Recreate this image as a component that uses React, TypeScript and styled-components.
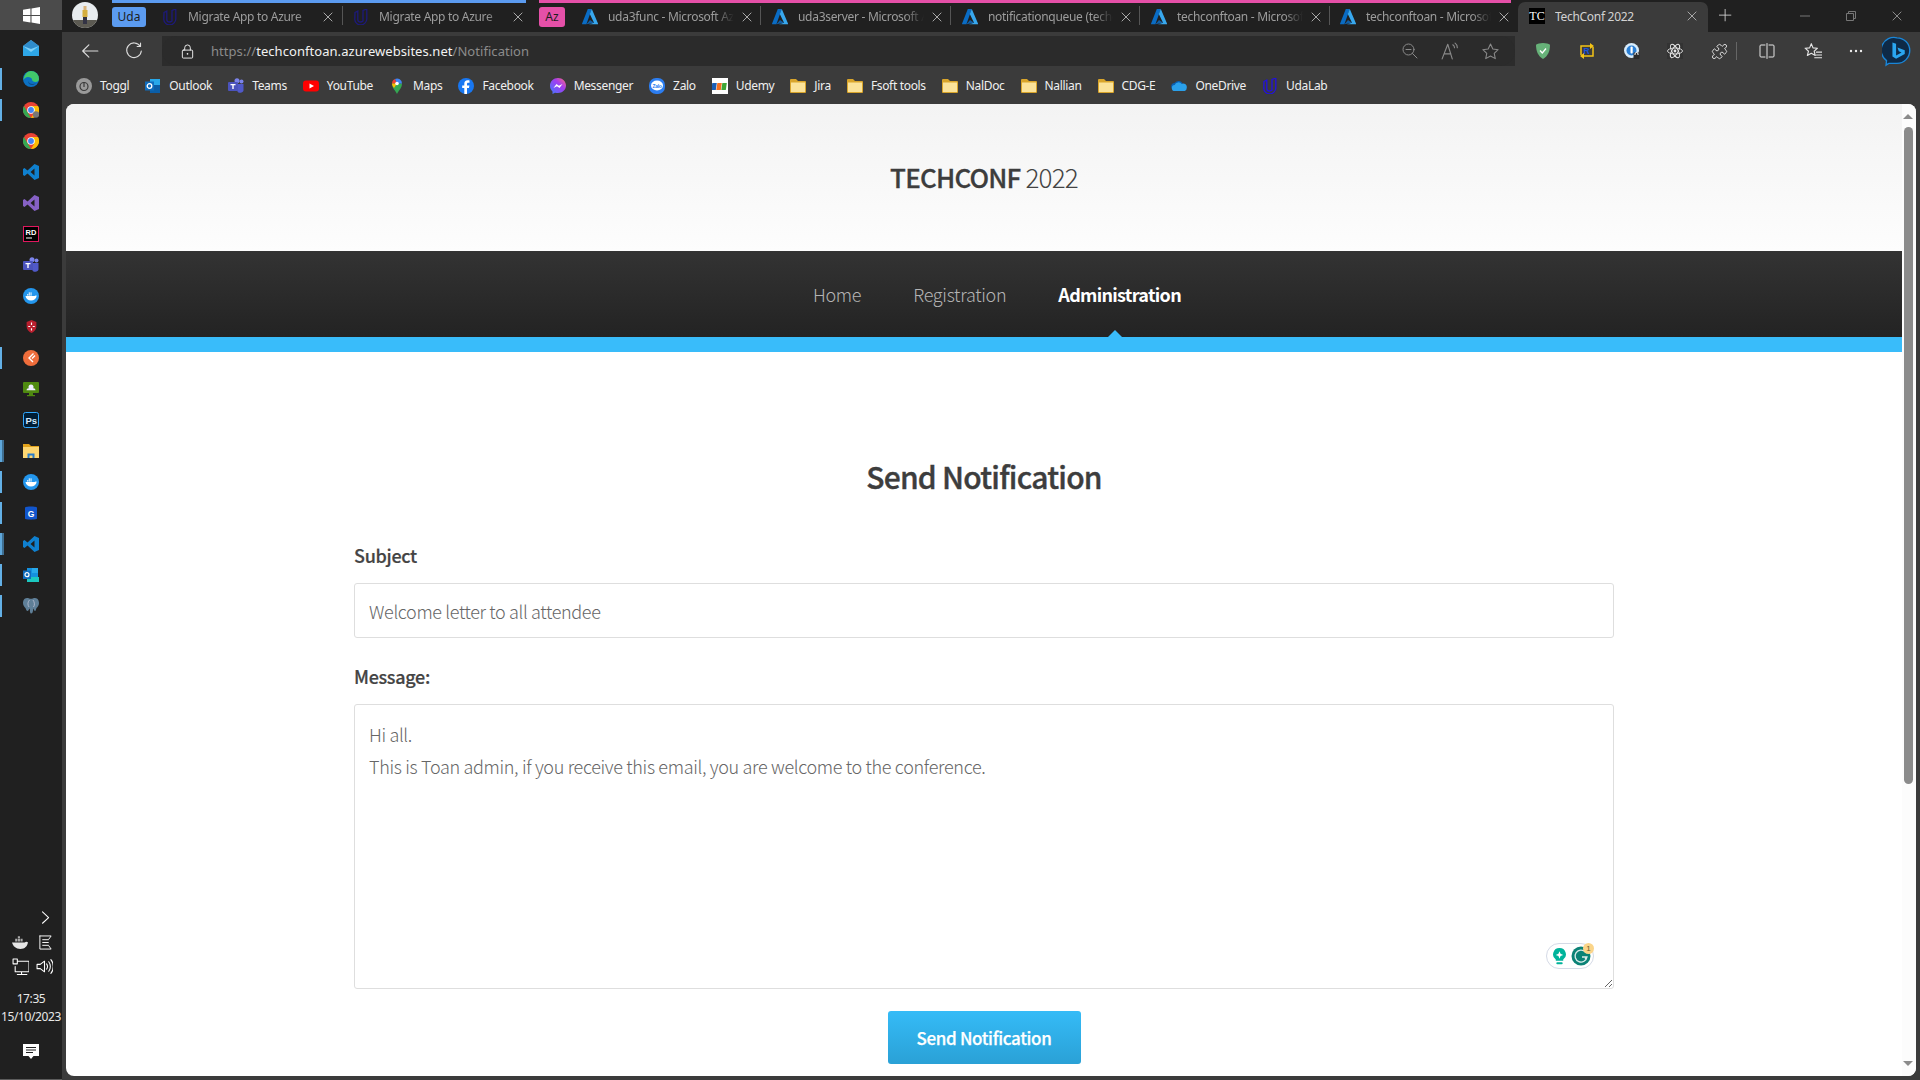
import React from "react";
import styled, { createGlobalStyle } from "styled-components";
import { Puzzle } from "lucide-react";

const GlobalStyle = createGlobalStyle`
  html, body { margin: 0; padding: 0; width: 1920px; height: 1080px; overflow: hidden; background: #202020; }
  * { box-sizing: border-box; }
`;

const CHROME_FONT = `"Noto Sans", "Open Sans", sans-serif`;
const PAGE_FONT = `"Noto Sans CJK SC", "Noto Sans", sans-serif`;

const Shell = styled.div`
  display: grid;
  grid-template-columns: 62px 1fr;
  width: 1920px;
  height: 1080px;
  overflow: hidden;
  font-family: ${CHROME_FONT};
`;

/* ---------- Windows taskbar on the left ---------- */
const Taskbar = styled.aside`
  display: flex;
  flex-direction: column;
  height: 1080px;
  background: #202020;
  border-bottom: 1px solid #5c5c5c;
`;
const StartButton = styled.div`
  height: 30px;
  background: #4b4b4b;
  display: flex;
  align-items: center;
  justify-content: center;
  flex: none;
`;
const AppList = styled.div`
  display: flex;
  flex-direction: column;
  padding-top: 2px;
`;
const AppSlot = styled.div<{ $run?: number }>`
  position: relative;
  height: 31px;
  display: flex;
  align-items: center;
  justify-content: center;
  &::before {
    content: "";
    display: ${(p) => (p.$run ? "block" : "none")};
    position: absolute;
    left: 0;
    top: 5px;
    height: 22px;
    width: ${(p) => (p.$run === 2 ? 4 : 2)}px;
    background: ${(p) => (p.$run === 2 ? "linear-gradient(90deg,#5fa8dc 50%,#3f6f92 50%)" : "#63b0e6")};
  }
`;
const Tray = styled.div`
  margin-top: auto;
  display: flex;
  flex-direction: column;
  align-items: center;
  color: #fff;
`;
const TrayRow = styled.div<{ $end?: boolean }>`
  width: 62px;
  height: 24px;
  display: flex;
  align-items: center;
  justify-content: ${(p) => (p.$end ? "flex-end" : "space-between")};
  padding: ${(p) => (p.$end ? "0 9px 0 0" : "0 9px 0 12px")};
`;
const Clock = styled.div`
  margin-top: 12px;
  font: 12px/18px ${CHROME_FONT};
  letter-spacing: -0.4px;
  text-align: center;
  color: #e8e8e8;
`;
const ActionCenter = styled.div`
  margin: 18px 0 19px;
  height: 16px;
  display: flex;
`;

/* ---------- Browser chrome ---------- */
const Browser = styled.div`
  display: flex;
  flex-direction: column;
  background: #3b3b3b;
  height: 1080px;
  min-width: 0;
`;
const TabStrip = styled.div`
  height: 32px;
  background: #202020;
  display: flex;
  align-items: stretch;
  flex: none;
  position: relative;
`;
const Avatar = styled.div`
  width: 50px;
  display: flex;
  align-items: center;
  justify-content: center;
  padding-right: 4px;
  padding-bottom: 2px;
`;
const Group = styled.div<{ $color: string; $trim?: number }>`
  display: flex;
  align-items: stretch;
  position: relative;
  margin-right: 7px;
  padding-top: 3px;
  &::before {
    content: "";
    position: absolute;
    left: 0;
    top: 0;
    right: ${(p) => p.$trim || 0}px;
    height: 3px;
    background: ${(p) => p.$color};
  }
`;
const Chip = styled.div<{ $color: string; $w: number }>`
  width: ${(p) => p.$w}px;
  height: 20px;
  margin-top: 4px;
  border-radius: 3px;
  background: ${(p) => p.$color};
  color: #1e1e1e;
  font-size: 12px;
  line-height: 20px;
  text-align: center;
`;
const Tab = styled.div<{ $w: number; $sep?: boolean; $pl?: number; $pr?: number }>`
  width: ${(p) => p.$w}px;
  display: flex;
  align-items: center;
  padding: 0 ${(p) => p.$pr ?? 9}px 2px ${(p) => p.$pl ?? 11}px;
  position: relative;
  color: #9c9c9c;
  font-size: 12px;
  letter-spacing: -0.3px;
  &::after {
    content: "";
    display: ${(p) => (p.$sep ? "block" : "none")};
    position: absolute;
    right: 0;
    top: 3px;
    height: 19px;
    width: 1px;
    background: #555;
  }
`;
const ActiveTab = styled(Tab)`
  background: #3b3b3b;
  color: #d2d2d2;
  border-radius: 7px 7px 0 0;
  height: 30px;
  margin-top: 2px;
`;
const TabTitle = styled.span`
  flex: 1;
  min-width: 0;
  margin-left: 10px;
  white-space: nowrap;
  overflow: hidden;
  -webkit-mask-image: linear-gradient(90deg, #000 85%, transparent);
  mask-image: linear-gradient(90deg, #000 85%, transparent);
`;
const PlainTitle = styled(TabTitle)`
  -webkit-mask-image: none;
  mask-image: none;
`;
const TabClose = styled.span`
  margin-left: 8px;
  display: flex;
  flex: none;
`;
const NewTab = styled.div`
  width: 36px;
  display: flex;
  align-items: center;
  justify-content: center;
`;
const WindowButtons = styled.div`
  margin-left: auto;
  display: flex;
  align-items: center;
`;
const WindowButton = styled.div`
  width: 46px;
  height: 32px;
  display: flex;
  align-items: center;
  justify-content: center;
`;
const TcFavicon = styled.div`
  width: 16px;
  height: 16px;
  background: #000;
  color: #fff;
  font: 12px/16px "Liberation Serif", serif;
  letter-spacing: 0;
  text-align: center;
  flex: none;
`;

const ToolbarBand = styled.div`
  height: 34px;
  padding-top: 4px;
  background: linear-gradient(#3b3b3b 4px, #2c2c2c 4px);
  display: flex;
  flex: none;
`;
const NavButtons = styled.div`
  width: 100px;
  display: flex;
  align-items: center;
  padding-left: 19px;
  gap: 26px;
  background: #3b3b3b;
`;
const AddressBar = styled.div`
  width: 1353px;
  height: 30px;
  background: #2b2b2b;
  border-radius: 15px;
  display: flex;
  align-items: center;
  padding: 0 16px 0 18px;
  font-size: 13px;
  letter-spacing: 0.05px;
  color: #8c8c8c;
`;
const UrlText = styled.div`
  margin-left: 16px;
  white-space: nowrap;
  b { font-weight: 400; color: #f2f2f2; }
`;
const AddressIcons = styled.div`
  margin-left: auto;
  display: flex;
  align-items: center;
  gap: 23px;
`;
const ToolActions = styled.div`
  flex: 1;
  display: flex;
  align-items: center;
  background: #3b3b3b;
  padding-left: 20px;
`;
const ToolSlot = styled.div<{ $w: number }>`
  width: ${(p) => p.$w}px;
  display: flex;
  justify-content: flex-start;
  align-items: center;
`;

const BookmarkBar = styled.div`
  height: 38px;
  flex: none;
  display: flex;
  align-items: center;
  gap: 16px;
  padding: 1px 0 0 14px;
  color: #f0f0f0;
  font-size: 12px;
`;
const Bookmark = styled.div`
  display: flex;
  align-items: center;
  gap: 8px;
  white-space: nowrap;
  letter-spacing: -0.33px;
`;

/* ---------- Page in the browser ---------- */
const Viewport = styled.div`
  margin: 0 4px 4px;
  height: 972px;
  background: #fff;
  border-radius: 8px;
  overflow: hidden;
  display: flex;
  font-family: ${PAGE_FONT};
`;
const Page = styled.div`
  flex: 1;
  min-width: 0;
  display: flex;
  flex-direction: column;
`;
const Masthead = styled.header`
  height: 147px;
  background: linear-gradient(#f3f3f3, #fdfdfd);
  display: flex;
  justify-content: center;
  padding-top: 53px;
`;
const Brand = styled.h1`
  margin: 0;
  font-size: 26px;
  line-height: 40px;
  font-weight: 300;
  color: #444;
  letter-spacing: -0.8px;
  b { font-weight: 500; color: #3d3d3d; -webkit-text-stroke: 0.3px currentColor; }
`;
const NavBar = styled.nav`
  height: 86px;
  background: linear-gradient(#333, #232323);
  display: flex;
  justify-content: center;
  gap: 52px;
  padding: 29px 0 0 26px;
`;
const NavLink = styled.a<{ $active?: boolean }>`
  position: relative;
  font-size: 18px;
  line-height: 28px;
  font-weight: ${(p) => (p.$active ? 700 : 300)};
  letter-spacing: ${(p) => (p.$active ? "-0.7px" : "-0.3px")};
  color: ${(p) => (p.$active ? "#fff" : "#b4b4b4")};
  height: 57px;
  &::after {
    content: "";
    display: ${(p) => (p.$active ? "block" : "none")};
    position: absolute;
    bottom: 0;
    left: 50%;
    margin-left: -12px;
    border: 7px solid transparent;
    border-top: 0;
    border-bottom-color: #39bcfa;
  }
`;
const AccentBar = styled.div`
  height: 15px;
  background: #39bcfa;
`;
const Content = styled.main`
  width: 1260px;
  margin: 0 auto;
  padding-top: 102px;
`;
const Heading = styled.h2`
  margin: 0 0 44px;
  font-size: 30px;
  line-height: 44px;
  font-weight: 500;
  text-align: center;
  color: #3d3d3d;
  letter-spacing: -0.76px;
  -webkit-text-stroke: 0.4px currentColor;
`;
const Label = styled.label`
  display: block;
  font-size: 18px;
  line-height: 26px;
  font-weight: 500;
  letter-spacing: -0.3px;
  color: #444;
  margin-bottom: 15px;
  -webkit-text-stroke: 0.2px currentColor;
`;
const TextInput = styled.input`
  display: block;
  width: 100%;
  height: 55px;
  border: 1px solid #dedede;
  border-radius: 3px;
  padding: 0 14px;
  margin-bottom: 25px;
  font: 300 18px ${PAGE_FONT};
  letter-spacing: -0.35px;
  color: #666;
  background: #fff;
  outline: none;
`;
const AreaWrap = styled.div`
  position: relative;
  height: 285px;
`;
const TextArea = styled.textarea`
  display: block;
  width: 100%;
  height: 285px;
  border: 1px solid #dedede;
  border-radius: 3px;
  padding: 13px 14px;
  font: 300 18px/32px ${PAGE_FONT};
  letter-spacing: -0.33px;
  color: #666;
  background: #fff;
  outline: none;
`;
const GrammarlyPill = styled.div`
  position: absolute;
  right: 20px;
  bottom: 20px;
  width: 48px;
  height: 26px;
  border: 1px solid #d5dae6;
  border-radius: 13px;
  background: #fff;
  display: flex;
  align-items: center;
  justify-content: space-between;
  padding: 0 2px 0 4px;
`;
const GrammarlyBadge = styled.span`
  position: absolute;
  top: -1px;
  right: -1px;
  width: 11px;
  height: 11px;
  border-radius: 50%;
  background: #fbd58a;
  color: #6b5a2a;
  font: 8px/11px "Liberation Sans", sans-serif;
  text-align: center;
`;
const ButtonRow = styled.div`
  display: flex;
  justify-content: center;
  padding-top: 22px;
`;
const SendButton = styled.button`
  width: 193px;
  height: 53px;
  border: 0;
  border-radius: 3px;
  background: linear-gradient(#35bbf7, #2aa1d6);
  color: #fff;
  font: 500 17px ${PAGE_FONT};
  letter-spacing: -0.35px;
  -webkit-text-stroke: 0.25px currentColor;
`;
const Scrollbar = styled.div`
  width: 14px;
  background: #fcfcfc;
  position: relative;
  flex: none;
`;
const ScrollThumb = styled.div`
  position: absolute;
  left: 2px;
  top: 23px;
  width: 9px;
  height: 657px;
  border-radius: 5px;
  background: #8b8b8b;
`;
const ScrollArrow = styled.div<{ $down?: boolean }>`
  position: absolute;
  left: 1px;
  ${(p) => (p.$down ? "bottom: 10px;" : "top: 10px;")}
  border-left: 5px solid transparent;
  border-right: 5px solid transparent;
  ${(p) => (p.$down ? "border-top: 5px solid #8b8b8b;" : "border-bottom: 5px solid #8b8b8b;")}
`;

/* ---------- Icon drawings ---------- */
type IconProps = { s?: number };
const Svg = ({ s = 16, children, vb = "0 0 16 16" }: { s?: number; children: React.ReactNode; vb?: string }) => (
  <svg width={s} height={s} viewBox={vb} style={{ display: "block", flex: "none" }}>{children}</svg>
);
const line = { fill: "none", stroke: "currentColor", strokeWidth: 1, strokeLinecap: "round", strokeLinejoin: "round" } as const;

const WinLogo = () => (
  <Svg s={17}><path fill="#fff" d="M0 2.5 7 1.5V7.5H0zM8 1.4 16 0V7.5H8zM0 8.5H7V14.5L0 13.5zM8 8.5H16V16L8 14.6z" /></Svg>
);
const MailIcon = () => (
  <Svg><path fill="#2ea7e8" d="M0 6h16v10H0z" /><path fill="#7fd0f7" d="M0 6 8 12l8-6L8 0z" /><path fill="#0d6fb8" d="M0 6 8 0l8 6-8 3z" opacity=".7" /></Svg>
);
const EdgeIcon = () => (
  <Svg>
    <circle cx="8" cy="8" r="8" fill="#0c71c3" />
    <path fill="#41c96a" d="M8 0a8 8 0 0 1 8 8c0 2-1.500 3-3.500 3S9 10 9 8.500 7 6 5 6 1 7.500.500 9C1 4 4 0 8 0z" />
    <path fill="#16365c" d="M5 10c1 3 5 4 8 2-2 3-8 3-8-2z" opacity=".6" />
  </Svg>
);
const ChromeIcon = ({ badge }: { badge?: boolean }) => (
  <svg width="16" height="16" viewBox="0 0 16 16" style={{ display: "block" }}>
    <circle cx="8" cy="8" r="8" fill="#e94235" />
    <path fill="#34a853" d="M8 16A8 8 0 0 1 1 4l4 7 3 5z" />
    <path fill="#fbbc04" d="M8 16a8 8 0 0 0 7-12H8l3 7z" />
    <circle cx="8" cy="8" r="3.800" fill="#fff" />
    <circle cx="8" cy="8" r="2.900" fill="#4285f4" />
    {badge && <circle cx="13" cy="12.500" r="3.200" fill="#777" />}
  </svg>
);
const VsCodeIcon = () => (
  <Svg><path fill="#0f80cf" d="M11.500 0 16 2v12l-4.500 2L4.500 9.500 1.500 12 0 11V5l1.500-1 3 2.500zM11.500 4.500 7.500 8l4 3.500z" /></Svg>
);
const VsIcon = () => (
  <Svg><path fill="#8661c5" d="M11.500 0 16 2v12l-4.500 2L4.500 9.500 1.500 12 0 11V5l1.500-1 3 2.500zM11.500 4.500 7.500 8l4 3.500z" /></Svg>
);
const RiderIcon = () => (
  <Svg>
    <rect x=".5" y=".5" width="15" height="15" fill="#000" stroke="#e0185e" />
    <text x="2.500" y="9" fontSize="7.500" fontWeight="700" fill="#fff" fontFamily="Liberation Sans">RD</text>
    <rect x="3" y="11.500" width="6" height="1" fill="#fff" />
  </Svg>
);
const TeamsIcon = ({ s = 16 }: IconProps) => (
  <Svg s={s}>
    <circle cx="13.500" cy="3.500" r="2" fill="#7b83eb" />
    <circle cx="9" cy="2.700" r="2.500" fill="#7b83eb" />
    <path fill="#5059c9" d="M9 6h6.500v5a3 3 0 0 1-6.500 1z" />
    <rect x="0" y="4" width="10" height="9" rx="1" fill="#4b53bc" />
    <path fill="#fff" d="M2.500 6h5v1.200H5.700V11H4.300V7.200H2.500z" />
  </Svg>
);
const DockerCircle = () => (
  <Svg>
    <circle cx="8" cy="8" r="8" fill="#2396ed" />
    <path fill="#fff" d="M2.500 8h9c.5-.7 1.500-.8 2.200-.3-.4 3-2.700 4.800-5.700 4.800-3 0-5-1.700-5.500-4.500z" />
    <path fill="#fff" d="M4 6.200h1.300v1.300H4zM5.700 6.200H7v1.300H5.700zM7.400 6.200h1.300v1.300H7.400zM5.700 4.500H7v1.300H5.700zM7.400 4.500h1.300v1.300H7.400z" />
  </Svg>
);
const RedShield = () => (
  <Svg s={13}><path fill="#b91f2e" d="M8 0l6 2.500v5.500c0 4-3 6.500-6 8-3-1.500-6-4-6-8V2.500z" /><path stroke="#fff" strokeWidth="1.400" d="M8 3v3M8 10v3M4 8h2.500M9.500 8H12" /></Svg>
);
const PostmanIcon = () => (
  <Svg><circle cx="8" cy="8" r="8" fill="#ef6d3b" /><path fill="none" stroke="#fff" strokeWidth="1.400" d="M10.500 3.500 6 8l4 4M12 5.500 9 8.500" /></Svg>
);
const MonitorIcon = () => (
  <Svg>
    <rect x="0" y="1" width="16" height="11" rx="1" fill="#4f8a10" />
    <rect x="6" y="12" width="4" height="2" fill="#4f8a10" /><rect x="4" y="14" width="8" height="1.200" fill="#4f8a10" />
    <circle cx="8" cy="6" r="2.500" fill="#eef" /><path fill="#eef" d="M3.500 9.200a2 2 0 0 1 2-2h5a2 2 0 0 1 2 2z" />
  </Svg>
);
const PsIcon = () => (
  <Svg>
    <rect x=".5" y=".5" width="15" height="15" rx="2" fill="#001e36" stroke="#31a8ff" />
    <text x="2.500" y="11.500" fontSize="9.500" fontWeight="700" fill="#d5e9fb" fontFamily="Liberation Sans">Ps</text>
  </Svg>
);
const ExplorerIcon = () => (
  <Svg>
    <path fill="#e2a21b" d="M0 1h6l2 2h8v3H0z" />
    <path fill="#fcd672" d="M0 4h16v11H0z" />
    <path fill="#2a7cc7" d="M4.500 10.500h7V15H9.500v-2.500h-3V15h-2z" />
  </Svg>
);
const GDriveIcon = () => (
  <Svg>
    <path fill="#1155cc" d="M2 2.500C2 1 14 1 14 2.500v11c0 1.500-12 1.500-12 0z" />
    <text x="4.800" y="12" fontSize="8.500" fontWeight="700" fill="#fff" fontFamily="Liberation Sans">G</text>
  </Svg>
);
const OutlookNew = () => (
  <Svg>
    <path fill="#1490df" d="M4 1h11v10H4z" /><path fill="#28a8ea" d="M9 1h6v5H9z" />
    <path fill="#1cc8c0" d="M4 10h12v5H4z" />
    <rect x="0" y="3.500" width="8" height="8.500" fill="#0f6cbd" />
    <circle cx="4" cy="7.700" r="2" fill="none" stroke="#fff" strokeWidth="1.200" />
  </Svg>
);
const PostgresIcon = () => (
  <Svg>
    <path fill="#5f7f98" d="M4 0c1.500 0 3 .8 4 .8S10.500 0 12 0c3 0 4 3 4 5 0 2.500-1.500 4-2.500 5-.5 1-.7 3-1.500 3s-1-2-1.700-2.500c-.2 2-.5 5-2 5S7 13 6.800 10.500C6 11 5.500 13 4.500 13S3 11 2.500 10C1.500 9 0 7.500 0 5c0-2 1-5 4-5z" />
    <path fill="none" stroke="#ccd" strokeWidth=".7" d="M6.500 2c-2 2-2 5-.5 7M10 2c1.500 2 2 5 .5 7" />
  </Svg>
);
const AzureA = () => (
  <Svg>
    <path fill="#0a6cc4" d="M5.800 0h4L4.400 15.300H.6a.5.5 0 0 1-.5-.7z" />
    <path fill="#38a8ee" d="M9.800 0 16 14.600a.5.5 0 0 1-.5.7H7l5-1.500L7.800 5z" />
    <path fill="#0f5ea8" d="M4.500 15.300 8 11l4 2.800z" />
  </Svg>
);
const UdacityU = ({ color = "#1d1a7a" }: { color?: string }) => (
  <Svg>
    <path fill="none" stroke={color} strokeWidth="1.300" d="M2 3.500 4.800 2v8.500c0 1.500 1.200 2.500 2.700 2.500 1 0 2-.5 2.500-1V1.500L13.800 0v10c0 3-3 6-6 6-3.200 0-6-2.500-6-5.500z" />
  </Svg>
);
const CloseX = ({ c = "#a8a8a8", s = 10 }: { c?: string; s?: number }) => (
  <svg width={s} height={s} viewBox="0 0 10 10" style={{ display: "block" }}><path d="M.7.7l8.600 8.600M9.300.7.7 9.300" stroke={c} strokeWidth="1" /></svg>
);
const ToggleIcon = () => (
  <Svg><circle cx="8" cy="8" r="8" fill="#9a9a9a" /><circle cx="8" cy="8.500" r="4" fill="none" stroke="#3b3b3b" strokeWidth="1.200" /><path stroke="#3b3b3b" strokeWidth="1.200" d="M8 4v5" /></Svg>
);
const OutlookIcon = () => (
  <Svg><path fill="#28a8ea" d="M5 1h10v13H5z" /><path fill="#0a5ea8" d="M5 7h10v8H5z" /><rect x="0" y="3.500" width="9" height="9" fill="#0f6cbd" /><circle cx="4.500" cy="8" r="2.300" fill="none" stroke="#fff" strokeWidth="1.300" /></Svg>
);
const YouTubeIcon = () => (
  <Svg><rect x="0" y="2.500" width="16" height="11" rx="3" fill="#f00" /><path fill="#fff" d="M6.500 5.500 11 8l-4.500 2.500z" /></Svg>
);
const MapsIcon = () => (
  <Svg>
    <path fill="#34a853" d="M8 16C6 12 3 10 3 5.500h10C13 10 10 12 8 16z" />
    <path fill="#ea4335" d="M3 5.500a5 5 0 0 1 3-4.600L8 5.500z" />
    <path fill="#4285f4" d="M6 .9A5 5 0 0 1 13 5.500H8z" />
    <path fill="#fbbc04" d="M3 5.500h5L5 10C4 8.500 3 7.500 3 5.500z" />
    <circle cx="8" cy="5.500" r="1.800" fill="#fff" />
  </Svg>
);
const FacebookIcon = () => (
  <Svg><circle cx="8" cy="8" r="8" fill="#1877f2" /><path fill="#fff" d="M9 16v-6h2l.4-2.500H9V6c0-.8.4-1.300 1.400-1.300h1.100V2.500S10.500 2.300 9.600 2.300C7.500 2.300 6.300 3.500 6.300 5.700v1.800H4.200V10h2.100v6z" /></Svg>
);
const MessengerIcon = () => (
  <Svg>
    <defs><linearGradient id="ms" x1="0" y1="1" x2="1" y2="0"><stop offset="0" stopColor="#3f7bff" /><stop offset=".6" stopColor="#a33cf0" /><stop offset="1" stopColor="#ff6c78" /></linearGradient></defs>
    <path fill="url(#ms)" d="M8 0C3.500 0 0 3.300 0 7.700c0 2.300 1 4.300 2.500 5.700V16l2.500-1.300c1 .3 2 .4 3 .4 4.500 0 8-3.300 8-7.500S12.500 0 8 0z" />
    <path fill="#fff" d="M3.500 10 6.500 6l2.300 1.800L12.500 6 9.500 10 7 8.200z" />
  </Svg>
);
const ZaloIcon = () => (
  <Svg>
    <rect width="16" height="16" rx="7" fill="#2c7df0" />
    <ellipse cx="8" cy="7.500" rx="6" ry="5" fill="#fff" />
    <text x="3.500" y="9.500" fontSize="5" fontWeight="700" fill="#2c7df0" fontFamily="Liberation Sans">Zalo</text>
  </Svg>
);
const FptIcon = () => (
  <Svg>
    <rect width="16" height="16" fill="#fff" />
    <rect x="1" y="5" width="4.500" height="7" fill="#1b5fb5" transform="skewX(-8)" />
    <rect x="6" y="5" width="4.500" height="7" fill="#f37021" transform="skewX(-8)" />
    <rect x="11" y="5" width="4.500" height="7" fill="#3fa535" transform="skewX(-8)" />
  </Svg>
);
const FolderIcon = () => (
  <Svg>
    <path fill="#d9a52b" d="M0 2a1 1 0 0 1 1-1h5l2 2h7a1 1 0 0 1 1 1v10a1 1 0 0 1-1 1H1a1 1 0 0 1-1-1z" />
    <path fill="#fbe39a" d="M1 4.500h14V14H1z" />
  </Svg>
);
const OneDriveIcon = () => (
  <Svg>
    <path fill="#0a5fb0" d="M4 12a3.500 3.500 0 0 1-.5-7A5 5 0 0 1 12 6z" />
    <path fill="#2aa0ea" d="M4 13a3 3 0 0 1-.3-6 4 4 0 0 1 7-1 3.500 3.500 0 0 1 5 4 3 3 0 0 1-2 3z" />
  </Svg>
);
const I = styled.span<{ $c?: string }>`
  display: flex;
  color: ${(p) => p.$c || "#d6d6d6"};
`;
const BackIcon = () => (
  <I $c="#dcdcdc"><Svg s={18}><path {...line} d="M15 8H1.500M7 2.500 1.500 8 7 13.500" /></Svg></I>
);
const ReloadIcon = () => (
  <I $c="#dcdcdc"><Svg s={18}><path {...line} d="M13.500 3.800A6.500 6.500 0 1 0 14.500 8M13.800 1v3h-3" /></Svg></I>
);
const LockIcon = () => (
  <I $c="#f0f0f0"><Svg s={15}><rect {...line} x="2.500" y="6.500" width="11" height="8.500" rx="1" /><path {...line} d="M5 6.500V4a3 3 0 0 1 6 0v2.500" /><circle cx="8" cy="10.500" r=".9" fill="currentColor" /></Svg></I>
);
const ZoomOut = () => (
  <I $c="#8a8a8a"><Svg s={16}><circle {...line} cx="6.500" cy="6.500" r="5.500" /><path {...line} d="M10.500 10.500 15 15M4 6.500h5" /></Svg></I>
);
const ReadAloud = () => (
  <I $c="#8a8a8a"><Svg s={18}><path {...line} d="M1 15 6 2l4 13M2.800 10.500h6M10.500 2.500c1 .7 1.500 1.500 1.500 2.500M12.500 1c1.500 1 2 2.500 2 4" /></Svg></I>
);
const StarIcon = ({ c = "#8a8a8a" }: { c?: string }) => (
  <I $c={c}><Svg s={17}><path {...line} d="M8 1l2.200 4.700 5 .6-3.700 3.400 1 5L8 12.300 3.500 14.700l1-5L.8 6.300l5-.6z" /></Svg></I>
);
const AdguardIcon = () => (
  <Svg><path fill="#67b279" d="M8 0C5 0 2.500.8 1 1.700 1 8 3 13 8 16c5-3 7-8 7-14.300C13.500.8 11 0 8 0z" /><path stroke="#fff" strokeWidth="1.300" fill="none" d="M5 7.500 7.300 10 11 5.500" /></Svg>
);
const RewardIcon = () => (
  <Svg>
    <path fill="none" stroke="#f3c316" strokeWidth="1.500" d="M2 12V3h10M14 4v9H4" />
    <path fill="#f3c316" d="M11 0l4 3-4 3zM5 10l-4 3 4 3z" />
    <text x="4.600" y="11" fontSize="8.500" fontWeight="700" fill="#1a55e0" fontFamily="Liberation Sans">R</text>
  </Svg>
);
const OnePassIcon = () => (
  <Svg>
    <circle cx="7.500" cy="7.500" r="7.500" fill="#d8ecfb" />
    <circle cx="7.500" cy="7.500" r="5" fill="#2a7fd5" />
    <rect x="6.500" y="3.500" width="2.200" height="7" rx="1" fill="#fff" />
    <rect x="9.500" y="9.500" width="6" height="6.500" rx="1" fill="#2b2b2b" /><path stroke="#fff" fill="none" d="M11 12V11a1.500 1.500 0 0 1 3 0v1" />
  </Svg>
);
const AtomIcon = () => (
  <Svg>
    <rect width="16" height="16" fill="#333" />
    <g fill="none" stroke="#e3e3e3" strokeWidth=".9">
      <ellipse cx="8" cy="8" rx="7.500" ry="3" /><ellipse cx="8" cy="8" rx="7.500" ry="3" transform="rotate(60 8 8)" /><ellipse cx="8" cy="8" rx="7.500" ry="3" transform="rotate(120 8 8)" />
    </g>
    <circle cx="8" cy="8" r="1.400" fill="#e3e3e3" />
  </Svg>
);
const SplitIcon = () => (
  <I $c="#e6e6e6"><Svg s={16}><path {...line} d="M6 2H2a1 1 0 0 0-1 1v10a1 1 0 0 0 1 1h4M10 2h4a1 1 0 0 1 1 1v10a1 1 0 0 1-1 1h-4M8 .5v15" /></Svg></I>
);
const FavIcon = () => (
  <I $c="#e6e6e6"><Svg s={18}><path {...line} d="M6.500 1.500 8 5.200l4 .3-3 2.700 1 3.800-3.500-2-3.500 2 1-3.800-3-2.700 4-.3zM11 9h5M11 11.500h5M9.500 14h6.500" /></Svg></I>
);
const DotsIcon = () => (
  <Svg><circle cx="3" cy="8" r="1.200" fill="#ededed" /><circle cx="8" cy="8" r="1.200" fill="#ededed" /><circle cx="13" cy="8" r="1.200" fill="#ededed" /></Svg>
);
const ToolDivider = styled.span`
  width: 1px;
  height: 18px;
  background: #666;
  margin-left: 8px;
`;
const BingIcon = () => (
  <svg width="30" height="31" viewBox="0 0 32 34" style={{ display: "block" }}>
    <path fill="#0e2a47" stroke="#1a86d8" strokeWidth="1.500" d="M16 2a14 14 0 0 1 0 28H7l-3 2 .5-5A14 14 0 0 1 16 2z" />
    <path fill="#2aa6f0" d="M11 7l4 1.500v13l6-3.500-3-1.300-1.500-4 8 3v4L15 25l-4-2.500z" />
  </svg>
);
const BulbIcon = () => (
  <Svg s={17}><path fill="#00b39b" d="M8 0a6 6 0 0 1 3.500 10.900V12H4.500v-1.100A6 6 0 0 1 8 0z" /><rect x="5" y="13.500" width="6" height="1.800" rx=".9" fill="#00b39b" /><path fill="#fff" d="M8 3l1 2.500L11.500 6.500 9 7.500 8 10 7 7.500 4.500 6.500 7 5.500z" /></Svg>
);
const GrammarlyG = () => (
  <svg width="20" height="20" viewBox="0 0 20 20" style={{ display: "block" }}>
    <circle cx="10" cy="10" r="9.500" fill="#0b8276" />
    <path fill="none" stroke="#fff" strokeWidth="1.300" d="M14.500 6A6 6 0 1 0 16 11h-5M16 11l-2 2" opacity=".85" />
  </svg>
);

/* tray */
const ChevronRight = () => (
  <I $c="#fff"><Svg s={14}><path {...line} strokeWidth={1.2} d="M4 1l7 6.500L4 14" /></Svg></I>
);
const TrayDocker = () => (
  <Svg s={17}><path fill="#e6e6e6" d="M0 8h12c.8-1 2-1 3-.3C14.500 11.500 12 14 8 14c-4.500 0-7-2.500-8-6z" /><path fill="#aaa" d="M3 4.500h2V7H3zM5.500 4.500h2V7h-2zM8 4.500h2V7H8zM5.500 2h2v2h-2z" /></Svg>
);
const TrayE = () => (
  <I $c="#fff"><Svg s={15}><path {...line} d="M2 1h12l-2.500 3.500M2 1v14h12l-2.500-3.500M5 5h6M5 8h6M5 11h6" /></Svg></I>
);
const TrayNet = () => (
  <I $c="#fff"><Svg s={17}><path {...line} d="M5 3h11v10H3V8M9 13v2M5 15.500h9M1 1h4v4.500H1z" /></Svg></I>
);
const TrayVol = () => (
  <I $c="#fff"><Svg s={17}><path {...line} d="M1 6h3l4-3v10l-4-3H1zM10 5.500c1 1.500 1 3.500 0 5M12 3.500c2 2.500 2 6.500 0 9M14 1.500c3 3.500 3 9.500 0 13" /></Svg></I>
);
const ChatIcon = () => (
  <Svg><path fill="#fff" d="M0 0h16v12h-5.500L8 15l-2.500-3H0z" /><path stroke="#202020" strokeWidth="1" d="M3 3.500h10M3 6h10M3 8.500h7" /></Svg>
);
const Portrait = () => (
  <svg width="26" height="26" viewBox="0 0 26 26" style={{ display: "block" }}>
    <clipPath id="av"><circle cx="13" cy="13" r="13" /></clipPath>
    <g clipPath="url(#av)">
      <rect width="26" height="26" fill="#e8ecef" />
      <rect y="18" width="26" height="8" fill="#5c5a52" />
      <rect x="11.500" y="4" width="3" height="4" fill="#d8b27a" />
      <rect x="10.500" y="8" width="5" height="7" fill="#d4ae3f" />
      <rect x="11" y="15" width="4" height="7" fill="#334" />
    </g>
  </svg>
);

const apps: { icon: React.ReactNode; run?: number }[] = [
  { icon: <MailIcon /> },
  { icon: <EdgeIcon />, run: 1 },
  { icon: <ChromeIcon badge />, run: 1 },
  { icon: <ChromeIcon /> },
  { icon: <VsCodeIcon /> },
  { icon: <VsIcon /> },
  { icon: <RiderIcon /> },
  { icon: <TeamsIcon /> },
  { icon: <DockerCircle /> },
  { icon: <RedShield /> },
  { icon: <PostmanIcon />, run: 1 },
  { icon: <MonitorIcon /> },
  { icon: <PsIcon /> },
  { icon: <ExplorerIcon />, run: 2 },
  { icon: <DockerCircle />, run: 1 },
  { icon: <GDriveIcon />, run: 1 },
  { icon: <VsCodeIcon />, run: 2 },
  { icon: <OutlookNew />, run: 1 },
  { icon: <PostgresIcon />, run: 1 },
];

const bookmarks: [string, React.ReactNode][] = [
  ["Toggl", <ToggleIcon />],
  ["Outlook", <OutlookIcon />],
  ["Teams", <TeamsIcon />],
  ["YouTube", <YouTubeIcon />],
  ["Maps", <MapsIcon />],
  ["Facebook", <FacebookIcon />],
  ["Messenger", <MessengerIcon />],
  ["Zalo", <ZaloIcon />],
  ["Udemy", <FptIcon />],
  ["Jira", <FolderIcon />],
  ["Fsoft tools", <FolderIcon />],
  ["NalDoc", <FolderIcon />],
  ["Nallian", <FolderIcon />],
  ["CDG-E", <FolderIcon />],
  ["OneDrive", <OneDriveIcon />],
  ["UdaLab", <UdacityU color="#2211dd" />],
];

const TabItem = ({ icon, title, w, sep, pl, pr }: { icon: React.ReactNode; title: string; w: number; sep?: boolean; pl?: number; pr?: number }) => (
  <Tab $w={w} $sep={sep} $pl={pl} $pr={pr}>
    {icon}
    <TabTitle>{title}</TabTitle>
    <TabClose><CloseX /></TabClose>
  </Tab>
);

export default function App() {
  return (
    <Shell>
      <GlobalStyle />
      <Taskbar>
        <StartButton><WinLogo /></StartButton>
        <AppList>
          {apps.map((a, i) => (
            <AppSlot key={i} $run={a.run}>{a.icon}</AppSlot>
          ))}
        </AppList>
        <Tray>
          <TrayRow $end><ChevronRight /></TrayRow>
          <TrayRow><TrayDocker /><TrayE /></TrayRow>
          <TrayRow><TrayNet /><TrayVol /></TrayRow>
          <Clock>17:35<br />15/10/2023</Clock>
          <ActionCenter><ChatIcon /></ActionCenter>
        </Tray>
      </Taskbar>

      <Browser>
        <TabStrip>
          <Avatar><Portrait /></Avatar>
          <Group $color="#5b9bf0" $trim={6}>
            <Chip $color="#5b9bf0" $w={34}>Uda</Chip>
            <TabItem w={197} sep pl={16} pr={10} icon={<UdacityU />} title="Migrate App to Azure" />
            <TabItem w={189} pl={10} icon={<UdacityU />} title="Migrate App to Azure" />
          </Group>
          <Group $color="#e550a8">
            <Chip $color="#e550a8" $w={26}>Az</Chip>
            <TabItem w={196} sep pl={17} icon={<AzureA />} title="uda3func - Microsoft Azure" />
            <TabItem w={190} sep icon={<AzureA />} title="uda3server - Microsoft Azure" />
            <TabItem w={189} sep icon={<AzureA />} title="notificationqueue (techconf)" />
            <TabItem w={190} sep icon={<AzureA />} title="techconftoan - Microsoft Azure" />
            <TabItem w={181} pl={10} pr={2} icon={<AzureA />} title="techconftoan - Microsoft Azure" />
          </Group>
          <ActiveTab $w={190} $pr={11}>
            <TcFavicon>TC</TcFavicon>
            <PlainTitle>TechConf 2022</PlainTitle>
            <TabClose><CloseX /></TabClose>
          </ActiveTab>
          <NewTab><Svg s={14}><path d="M7 0v14M0 7h14" stroke="#d0d0d0" strokeWidth="1" /></Svg></NewTab>
          <WindowButtons>
            <WindowButton><Svg s={10} vb="0 0 10 10"><path d="M0 5h10" stroke="#777" /></Svg></WindowButton>
            <WindowButton><Svg s={10} vb="0 0 10 10"><path d="M.5 2.500h7v7h-7zM2.500 2.500v-2h7v7h-2" fill="none" stroke="#777" /></Svg></WindowButton>
            <WindowButton><CloseX c="#8a8a8a" /></WindowButton>
          </WindowButtons>
        </TabStrip>

        <ToolbarBand>
          <NavButtons><BackIcon /><ReloadIcon /></NavButtons>
          <AddressBar>
            <LockIcon />
            <UrlText>https://<b>techconftoan.azurewebsites.net</b>/Notification</UrlText>
            <AddressIcons><ZoomOut /><ReadAloud /><StarIcon /></AddressIcons>
          </AddressBar>
          <ToolActions>
            <ToolSlot $w={44}><AdguardIcon /></ToolSlot>
            <ToolSlot $w={45}><RewardIcon /></ToolSlot>
            <ToolSlot $w={43}><OnePassIcon /></ToolSlot>
            <ToolSlot $w={44}><AtomIcon /></ToolSlot>
            <ToolSlot $w={48}>
              <I $c="#e6e6e6"><Puzzle size={17} strokeWidth={1.3} /></I>
              <ToolDivider />
            </ToolSlot>
            <ToolSlot $w={45}><SplitIcon /></ToolSlot>
            <ToolSlot $w={44}><FavIcon /></ToolSlot>
            <ToolSlot $w={34}><DotsIcon /></ToolSlot>
            <BingIcon />
          </ToolActions>
        </ToolbarBand>

        <BookmarkBar>
          {bookmarks.map(([name, icon]) => (
            <Bookmark key={name}>{icon}<span>{name}</span></Bookmark>
          ))}
        </BookmarkBar>

        <Viewport>
          <Page>
            <Masthead>
              <Brand><b>TECHCONF</b> 2022</Brand>
            </Masthead>
            <NavBar>
              <NavLink>Home</NavLink>
              <NavLink>Registration</NavLink>
              <NavLink $active>Administration</NavLink>
            </NavBar>
            <AccentBar />
            <Content>
              <Heading>Send Notification</Heading>
              <Label>Subject</Label>
              <TextInput readOnly value="Welcome letter to all attendee" />
              <Label>Message:</Label>
              <AreaWrap>
                <TextArea readOnly value={"Hi all.\nThis is Toan admin, if you receive this email, you are welcome to the conference."} />
                <GrammarlyPill>
                  <BulbIcon />
                  <GrammarlyG />
                  <GrammarlyBadge>1</GrammarlyBadge>
                </GrammarlyPill>
              </AreaWrap>
              <ButtonRow><SendButton>Send Notification</SendButton></ButtonRow>
            </Content>
          </Page>
          <Scrollbar>
            <ScrollArrow />
            <ScrollThumb />
            <ScrollArrow $down />
          </Scrollbar>
        </Viewport>
      </Browser>
    </Shell>
  );
}
